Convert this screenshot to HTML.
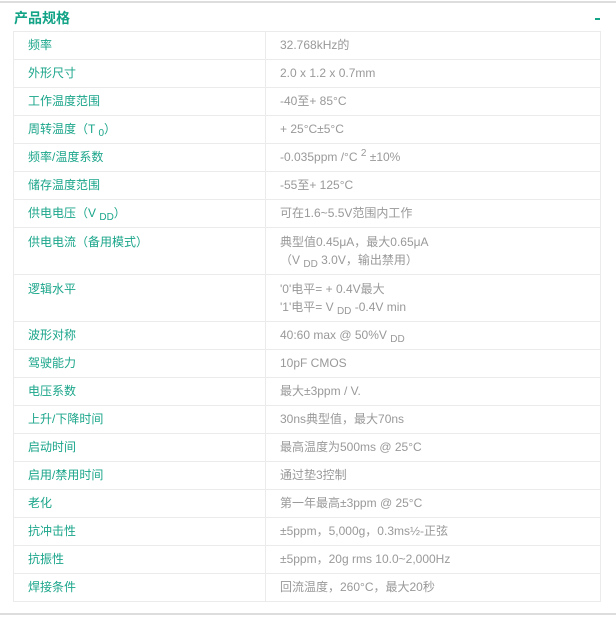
<!DOCTYPE html>
<html><head><meta charset="utf-8"><style>
body{margin:0;background:#fff;width:616px;height:617px;position:relative;font-family:"Liberation Sans","Noto Sans CJK SC",sans-serif;overflow:hidden}
.top{position:absolute;left:0;top:1px;width:616px;height:2px;background:#ddd}
.bot{position:absolute;left:0;top:613px;width:616px;height:2px;background:#ddd}
.title{position:absolute;left:14px;top:8px;font-size:14px;font-weight:bold;color:#13a386}
.dash{position:absolute;left:595px;top:18px;width:5px;height:2px;background:#13a386}
table{position:absolute;left:13px;top:31px;width:588px;border-collapse:collapse;font-size:12px}
td{border:1px solid #ebebeb;padding:5px 12px 5px 14px;line-height:17px;height:17px;vertical-align:top;box-sizing:content-box}
td:first-child{width:225px;color:#1aa58a}
td:last-child{color:#999}
tr.t td{line-height:18px;height:36px}
sub,sup{font-size:10px;line-height:0;vertical-align:baseline;position:relative}
sub{top:3px}sup{top:-5px}
</style></head><body>
<div class="top"></div>
<div class="title">产品规格</div><div class="dash"></div>
<table>
<tr><td>频率</td><td>32.768kHz的</td></tr>
<tr><td>外形尺寸</td><td>2.0 x 1.2 x 0.7mm</td></tr>
<tr><td>工作温度范围</td><td>-40至+ 85°C</td></tr>
<tr><td>周转温度（T <sub>0</sub>）</td><td>+ 25°C±5°C</td></tr>
<tr><td>频率/温度系数</td><td>-0.035ppm /°C <sup>2</sup> ±10%</td></tr>
<tr><td>储存温度范围</td><td>-55至+ 125°C</td></tr>
<tr><td>供电电压（V <sub>DD</sub>）</td><td>可在1.6~5.5V范围内工作</td></tr>
<tr class="t"><td>供电电流（备用模式）</td><td>典型值0.45μA，最大0.65μA<br>（V <sub>DD</sub> 3.0V，输出禁用）</td></tr>
<tr class="t"><td>逻辑水平</td><td>'0'电平= + 0.4V最大<br>'1'电平= V <sub>DD</sub> -0.4V min</td></tr>
<tr><td>波形对称</td><td>40:60 max @ 50%V <sub>DD</sub></td></tr>
<tr><td>驾驶能力</td><td>10pF CMOS</td></tr>
<tr><td>电压系数</td><td>最大±3ppm / V.</td></tr>
<tr><td>上升/下降时间</td><td>30ns典型值，最大70ns</td></tr>
<tr><td>启动时间</td><td>最高温度为500ms @ 25°C</td></tr>
<tr><td>启用/禁用时间</td><td>通过垫3控制</td></tr>
<tr><td>老化</td><td>第一年最高±3ppm @ 25°C</td></tr>
<tr><td>抗冲击性</td><td>±5ppm，5,000g，0.3ms½-正弦</td></tr>
<tr><td>抗振性</td><td>±5ppm，20g rms 10.0~2,000Hz</td></tr>
<tr><td>焊接条件</td><td>回流温度，260°C，最大20秒</td></tr>
</table>
<div class="bot"></div>
</body></html>
